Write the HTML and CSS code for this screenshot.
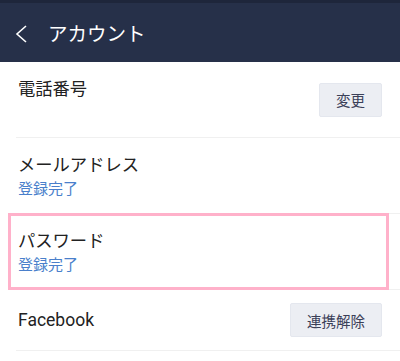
FILE: index.html
```html
<!DOCTYPE html>
<html lang="ja">
<head>
    <meta charset="UTF-8">
    <meta name="viewport" content="width=device-width, initial-scale=1.0">
    <title>アカウント</title>
    <link rel="stylesheet" href="styles.css">
</head>
<body>
    <div class="header">
        <svg class="header__back" width="14" height="20" viewBox="0 0 14 20">
            <path d="M11 2 L2 10 L11 18" fill="none" stroke="#fff" stroke-width="1.6"/>
        </svg>
        <span class="header__title">アカウント</span>
    </div>
    <div class="list">
        <div class="row row--top">
            <div class="row__text">
                <div class="row__label">電話番号</div>
            </div>
            <button class="row__button">変更</button>
        </div>
        <div class="row row--top">
            <div class="row__text">
                <div class="row__label">メールアドレス</div>
                <div class="row__status">登録完了</div>
            </div>
        </div>
        <div class="row row--top row--highlight">
            <div class="row__text">
                <div class="row__label">パスワード</div>
                <div class="row__status">登録完了</div>
            </div>
        </div>
        <div class="row row--center">
            <div class="row__text">
                <div class="row__label row__label--latin">Facebook</div>
            </div>
            <button class="row__button">連携解除</button>
        </div>
    </div>
</body>
</html>
```

FILE: styles.css
```css
* {
    margin: 0;
    padding: 0;
    box-sizing: border-box;
}

body {
    background-color: #fff;
    font-family: "Noto Sans CJK JP", "Noto Sans", sans-serif;
    color: #222;
}

.header {
    height: 62px;
    background-color: #263049;
    border-top: 3px solid #1e263b;
    display: flex;
    align-items: center;
    padding-left: 15px;
}

.header__back {
    display: block;
    margin-top: 2px;
}

.header__title {
    color: #fff;
    font-size: 19.5px;
    margin-left: 19px;
    line-height: 1;
}

.list {
    padding-left: 16px;
}

.row {
    display: flex;
    justify-content: space-between;
    border-bottom: 1px solid #f0f0f0;
    padding-left: 2px;
    padding-right: 18px;
    position: relative;
}

.row--top {
    height: 76px;
    align-items: center;
}

.row--top .row__text {
    align-self: flex-start;
    padding-top: 13px;
}

.row--center {
    height: 61px;
    align-items: center;
}

.row--highlight::after {
    content: '';
    position: absolute;
    top: -1px;
    bottom: -1px;
    left: -8px;
    right: 11px;
    border: 3px solid #ffb1ca;
}

.row__label {
    font-size: 17.3px;
    line-height: 26px;
    color: #222;
}

.row__label--latin {
    font-family: "Roboto", "Noto Sans CJK JP", sans-serif;
    font-size: 17.5px;
}

.row__status {
    font-size: 15px;
    line-height: 21px;
    color: #4a7fcb;
}

.row__button {
    font-family: "Noto Sans CJK JP", sans-serif;
    font-size: 14.5px;
    color: #3b4058;
    background-color: #eceef3;
    border: 1px solid #e4e7ee;
    border-radius: 2px;
    height: 34px;
    padding: 0 16px;
}
```
